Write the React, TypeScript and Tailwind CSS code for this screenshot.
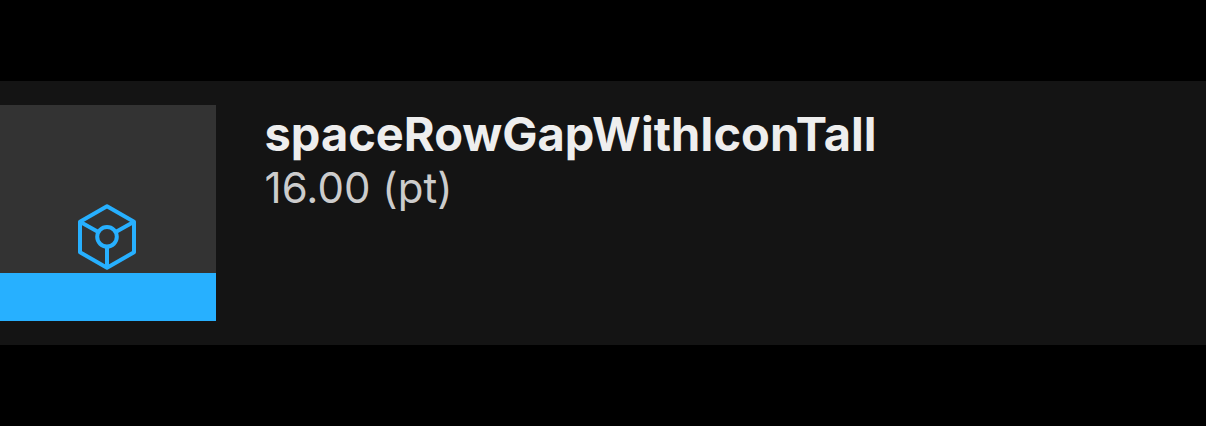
const Cube = () => (
  <svg className="block" width="60" height="68" viewBox="0 0 60 68" fill="none" stroke="#27b0ff" strokeWidth="4" strokeLinejoin="round">
    <path d="M30 3.3 57 18.7V49.3L30 64.7 3 49.3V18.7Z" />
    <circle cx="30" cy="33.8" r="9.8" />
    <path d="M3 18.7 21.3 29M57 18.7 38.7 29M30 43.6V64.7" />
  </svg>
);

export default function App() {
  return (
    <main className="h-[426px] w-full overflow-hidden bg-black pt-[81px] font-['Inter',sans-serif]">
      <section className="flex h-[264px] gap-[48.5px] bg-[#141414] py-6">
        <div className="flex h-[216px] w-[216px] flex-col items-center justify-end bg-[#333333]">
          <div className="mb-[2px] mr-[2px]"><Cube /></div>
          <div className="h-[48px] w-full bg-[#27b0ff]" />
        </div>
        <div className="whitespace-nowrap">
          <h1 className="text-[47px] font-bold leading-[57px] text-[#eeeeee]">spaceRowGapWithIconTall</h1>
          <p className="text-[42px] font-normal leading-[52px] tracking-[0.05px] text-[#cccccc]">16.00 (pt)</p>
        </div>
      </section>
    </main>
  );
}
